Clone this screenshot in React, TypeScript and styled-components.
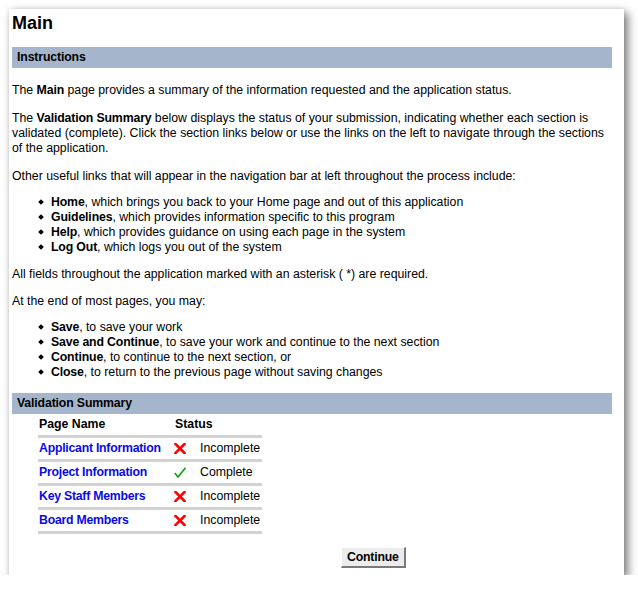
import React from 'react';
import styled, { createGlobalStyle } from 'styled-components';

const GlobalStyle = createGlobalStyle`
    html, body {
        margin: 0;
        padding: 0;
        background: #ffffff;
    }
    body {
        font-family: 'Liberation Sans', Arial, sans-serif;
        font-size: 12.3px;
        color: #000000;
    }
`;

type Status = 'complete' | 'incomplete';

const sections: { name: string; status: Status }[] = [
    { name: 'Applicant Information', status: 'incomplete' },
    { name: 'Project Information', status: 'complete' },
    { name: 'Key Staff Members', status: 'incomplete' },
    { name: 'Board Members', status: 'incomplete' },
];

const navLinks = [
    { label: 'Home', text: ', which brings you back to your Home page and out of this application' },
    { label: 'Guidelines', text: ', which provides information specific to this program' },
    { label: 'Help', text: ', which provides guidance on using each page in the system' },
    { label: 'Log Out', text: ', which logs you out of the system' },
];

const pageActions = [
    { label: 'Save', text: ', to save your work' },
    { label: 'Save and Continue', text: ', to save your work and continue to the next section' },
    { label: 'Continue', text: ', to continue to the next section, or' },
    { label: 'Close', text: ', to return to the previous page without saving changes' },
];

function CrossIcon() {
    return (
        <svg width="12" height="11" viewBox="0 0 12 11">
            <path d="M1.5 1 L10.5 10 M10.5 1 L1.5 10" stroke="#ff0000" strokeWidth="2.6" strokeLinecap="square" fill="none" />
        </svg>
    );
}

function CheckIcon() {
    return (
        <svg width="12" height="11" viewBox="0 0 12 11">
            <path d="M0.8 6 L4 10 L11.5 0.8" stroke="#10a010" strokeWidth="1.6" fill="none" />
        </svg>
    );
}

export default function App() {
    return (
        <>
            <GlobalStyle />
            <Window>
                <Title>Main</Title>

                <SectionBar>Instructions</SectionBar>
                <Paragraph $gap={15}>
                    The <Strong>Main</Strong> page provides a summary of the information requested and the application
                    status.
                </Paragraph>
                <Paragraph $gap={13}>
                    The <Strong>Validation Summary</Strong> below displays the status of your submission, indicating
                    whether each section is validated (complete). Click the section links below or use the links on the
                    left to navigate through the sections of the application.
                </Paragraph>
                <Paragraph $gap={13}>
                    Other useful links that will appear in the navigation bar at left throughout the process include:
                </Paragraph>
                <BulletList>
                    {navLinks.map((v, i) => (
                        <Bullet key={i}>
                            <Strong>{v.label}</Strong>
                            {v.text}
                        </Bullet>
                    ))}
                </BulletList>
                <Paragraph $gap={12}>All fields throughout the application marked with an asterisk ( *) are required.</Paragraph>
                <Paragraph $gap={12}>At the end of most pages, you may:</Paragraph>
                <BulletList>
                    {pageActions.map((v, i) => (
                        <Bullet key={i}>
                            <Strong>{v.label}</Strong>
                            {v.text}
                        </Bullet>
                    ))}
                </BulletList>

                <SectionBar $spaced>Validation Summary</SectionBar>
                <SummaryTable>
                    <thead>
                        <tr>
                            <HeadCell>Page Name</HeadCell>
                            <HeadCell colSpan={2}>Status</HeadCell>
                        </tr>
                    </thead>
                    <tbody>
                        {sections.map((v, i) => (
                            <tr key={i}>
                                <NameCell>
                                    <PageLink href="#">{v.name}</PageLink>
                                </NameCell>
                                <IconCell>{v.status === 'complete' ? <CheckIcon /> : <CrossIcon />}</IconCell>
                                <StatusCell>{v.status === 'complete' ? 'Complete' : 'Incomplete'}</StatusCell>
                            </tr>
                        ))}
                    </tbody>
                </SummaryTable>

                <Footer>
                    <ContinueButton>Continue</ContinueButton>
                </Footer>
            </Window>
        </>
    );
}

const Window = styled.div`
    margin: 9px 0 0 9px;
    width: 615px;
    height: 566px;
    box-sizing: border-box;
    padding: 0 12px 0 3px;
    background: #ffffff;
    box-shadow: 4px 4px 9px rgba(0, 0, 0, 0.5), 0 0 5px rgba(0, 0, 0, 0.12);
    display: flex;
    flex-direction: column;
`;

const Title = styled.h1`
    margin: 3px 0 13px;
    font-size: 18px;
    line-height: 22px;
    font-weight: bold;
`;

const SectionBar = styled.div<{ $spaced?: boolean }>`
    margin-top: ${(p) => (p.$spaced ? '13px' : '0')};
    height: 21px;
    line-height: 21px;
    padding-left: 5px;
    background: #a4b5cc;
    font-weight: bold;
    letter-spacing: -0.15px;
`;

const Paragraph = styled.p<{ $gap: number }>`
    margin: ${(p) => p.$gap}px 0 0;
    line-height: 15px;
`;

const Strong = styled.b`
    font-weight: bold;
    letter-spacing: -0.15px;
`;

const BulletList = styled.ul`
    list-style: none;
    margin: 11px 0 0;
    padding-left: 26px;
`;

const Bullet = styled.li`
    line-height: 15px;

    &::before {
        content: '';
        display: inline-block;
        width: 4px;
        height: 4px;
        margin: 0 8px 2px 1px;
        background: #000000;
        transform: rotate(45deg);
        vertical-align: middle;
    }
`;

const SummaryTable = styled.table`
    margin-left: 26px;
    width: 224px;
    border-collapse: separate;
    border-spacing: 0;
`;

const HeadCell = styled.th`
    padding: 0 1px;
    line-height: 21px;
    text-align: left;
    font-weight: bold;
    border-bottom: 3px solid #d2d2d2;
`;

const NameCell = styled.td`
    width: 134px;
    padding: 0 1px;
    line-height: 21px;
    white-space: nowrap;
    border-bottom: 3px solid #d2d2d2;
`;

const IconCell = styled.td`
    width: 26px;
    padding: 0;
    border-bottom: 3px solid #d2d2d2;

    svg {
        display: block;
    }
`;

const StatusCell = styled.td`
    padding: 0;
    line-height: 21px;
    white-space: nowrap;
    border-bottom: 3px solid #d2d2d2;
`;

const PageLink = styled.a`
    color: #0a0ae8;
    font-weight: bold;
    letter-spacing: -0.25px;
    text-decoration: none;
`;

const Footer = styled.div`
    margin-top: auto;
    padding: 0 0 7px 329px;
`;

const ContinueButton = styled.button`
    height: 21px;
    padding: 0 5px;
    font-family: 'Liberation Sans', Arial, sans-serif;
    font-size: 12.3px;
    font-weight: bold;
    letter-spacing: -0.2px;
    color: #000000;
    background: #ececec;
    border-style: solid;
    border-width: 1px 2px 2px 1px;
    border-color: #ffffff #7a7a7a #7a7a7a #ffffff;
`;
